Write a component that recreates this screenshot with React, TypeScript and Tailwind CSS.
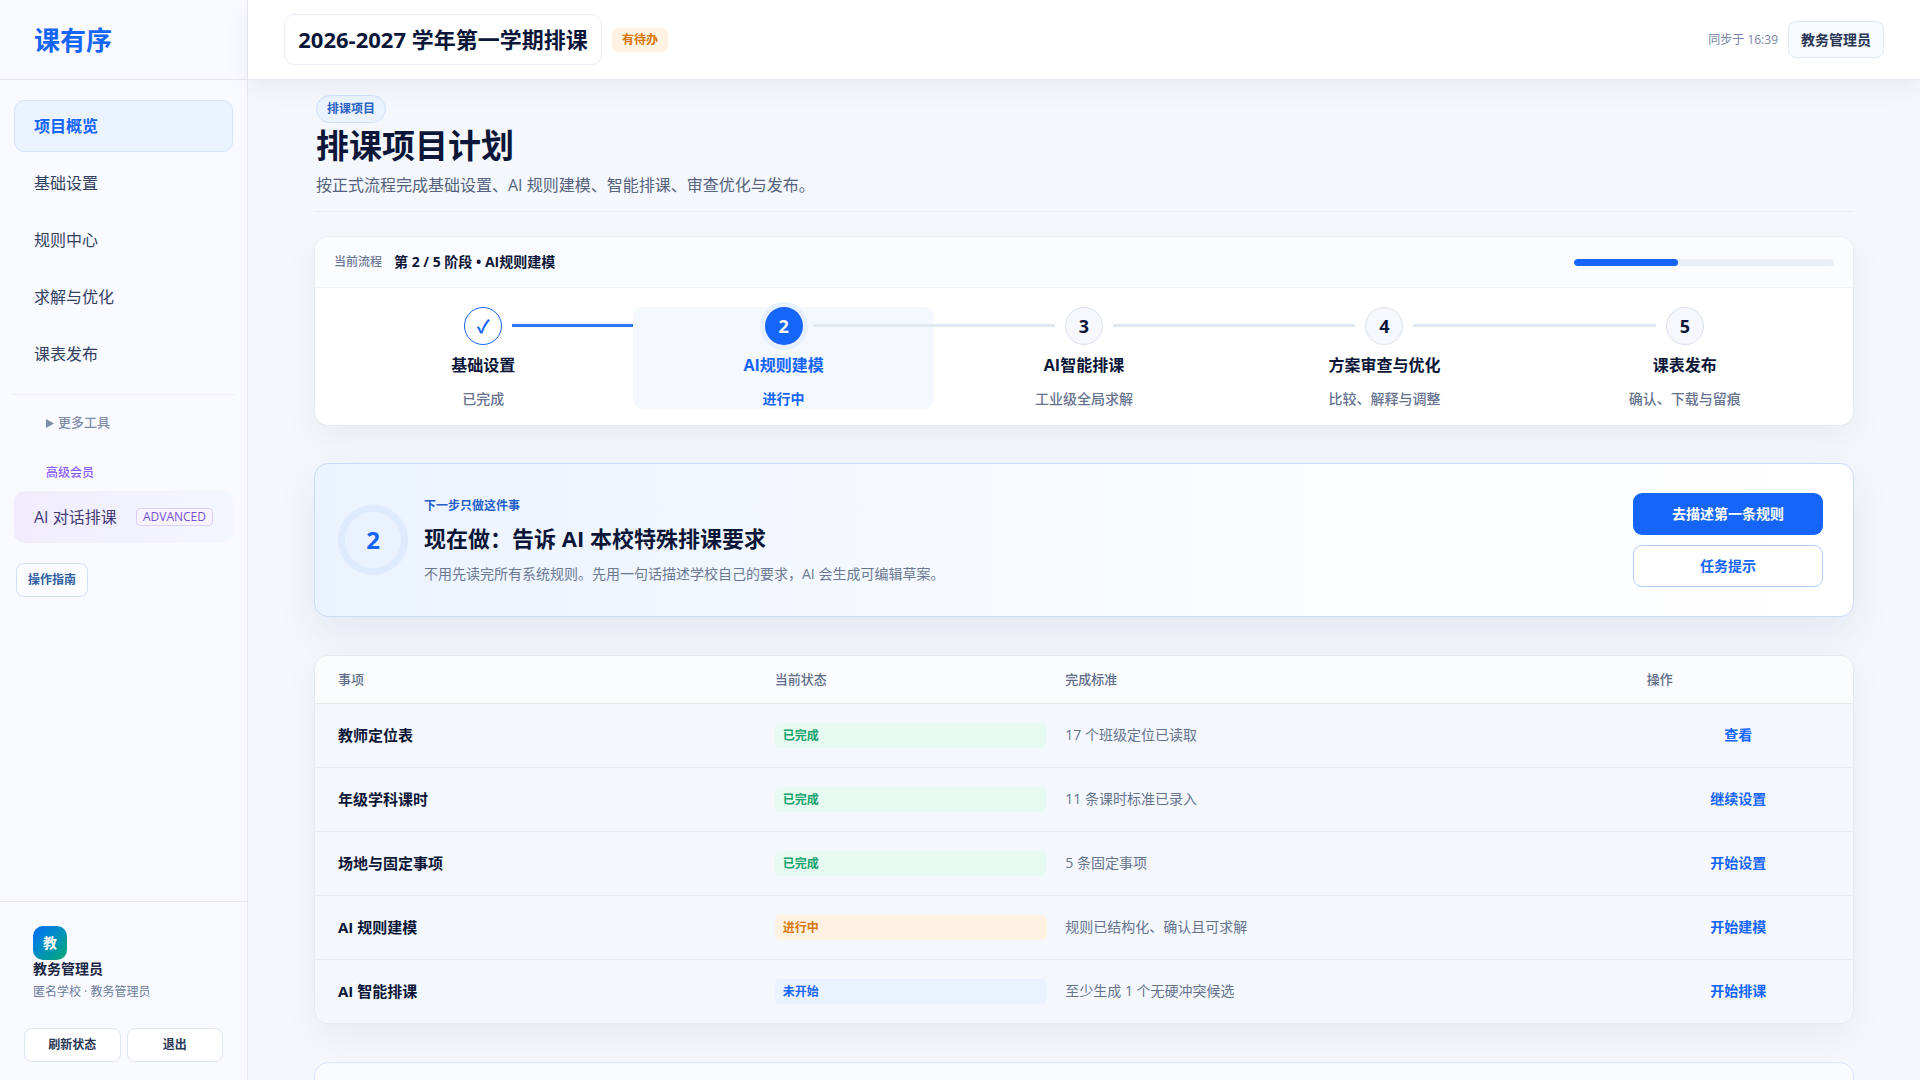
const navItems = ['项目概览', '基础设置', '规则中心', '求解与优化', '课表发布']

const steps = [
  { mark: '✓', title: '基础设置', note: '已完成', state: 'done' },
  { mark: '2', title: 'AI规则建模', note: '进行中', state: 'active' },
  { mark: '3', title: 'AI智能排课', note: '工业级全局求解', state: 'todo' },
  { mark: '4', title: '方案审查与优化', note: '比较、解释与调整', state: 'todo' },
  { mark: '5', title: '课表发布', note: '确认、下载与留痕', state: 'todo' },
]

const rows = [
  { name: '教师定位表', status: '已完成', tone: 'green', standard: '17 个班级定位已读取', action: '查看' },
  { name: '年级学科课时', status: '已完成', tone: 'green', standard: '11 条课时标准已录入', action: '继续设置' },
  { name: '场地与固定事项', status: '已完成', tone: 'green', standard: '5 条固定事项', action: '开始设置' },
  { name: 'AI 规则建模', status: '进行中', tone: 'orange', standard: '规则已结构化、确认且可求解', action: '开始建模' },
  { name: 'AI 智能排课', status: '未开始', tone: 'blue', standard: '至少生成 1 个无硬冲突候选', action: '开始排课' },
]

const toneClass: Record<string, string> = {
  green: 'bg-[#e7faf1] text-[#1aa36f]',
  orange: 'bg-[#fff2e2] text-[#d97706]',
  blue: 'bg-[#eaf1ff] text-[#1565f9]',
}

const markClass: Record<string, string> = {
  done: 'border border-[#1565f9] bg-white text-[#1565f9]',
  active: 'bg-[#1565f9] text-white ring-5 ring-[#e7f0ff]',
  todo: 'border border-[#d9e1ee] bg-[#f6f8fd] text-[#0b1638]',
}

function Sidebar() {
  return (
    <aside className="flex w-[248px] shrink-0 flex-col border-r border-[#e3e9f2] bg-[#f9faff]">
      <div className="flex h-20 shrink-0 items-center border-b border-[#e3e9f2] pl-[34px]">
        <span className="text-[26px] leading-8 font-bold text-[#1565f9]">课有序</span>
      </div>
      <nav className="flex flex-col gap-[5px] px-3.5 pt-5">
        {navItems.map((item, index) => (
          <a
            key={item}
            href="#"
            className={
              index === 0
                ? 'flex h-[52px] items-center rounded-[10px] border border-[#d5e4fb] bg-[#ebf3ff] px-[19px] text-base font-bold text-[#1565f9]'
                : 'flex h-[52px] items-center rounded-[10px] border border-transparent px-[19px] text-base text-[#334160]'
            }
          >
            {item}
          </a>
        ))}
      </nav>
      <div className="mx-3 mt-3.5 border-t border-[#edf1f7]" />
      <details className="px-[46px] pt-[18px]">
        <summary className="flex h-5 cursor-pointer list-none items-center gap-1 text-[13px] font-medium text-[#7f8ca5]">
          <svg width="8" height="9" viewBox="0 0 8 9" fill="currentColor">
            <path d="M0 0L8 4.5L0 9Z" />
          </svg>
          更多工具
        </summary>
      </details>
      <div className="mt-[30px] px-[46px] text-xs leading-5 font-medium text-[#8b5cf6]">高级会员</div>
      <a
        href="#"
        className="mx-3.5 mt-2 flex h-[52px] items-center justify-between rounded-[10px] bg-linear-to-r from-[#f1ecfd] to-[#f3f7ff] px-5 text-base text-[#453a78]"
      >
        AI 对话排课
        <span className="rounded border border-[#dccffb] bg-[#f8f4ff] px-1.5 text-xs leading-4 text-[#7450d8]">
          ADVANCED
        </span>
      </a>
      <button className="mt-5 ml-4 h-[34px] w-[72px] rounded-lg border border-[#cfdff3] bg-[#fafcff] text-xs font-bold text-[#2f5f9f]">
        操作指南
      </button>
      <div className="mt-auto border-t border-[#e3e9f2] px-6 pt-6 pb-[18px]">
        <div className="px-[9px]">
          <div className="flex size-[34px] items-center justify-center rounded-[10px] bg-linear-to-br from-[#1668ff] to-[#22a86e] text-sm font-bold text-white">
            教
          </div>
          <div className="text-sm leading-[18px] font-bold text-[#1b2747]">教务管理员</div>
          <div className="mt-1 text-xs leading-5 text-[#6b7a99]">匿名学校 · 教务管理员</div>
        </div>
        <div className="mt-[26px] grid grid-cols-2 gap-1.5 text-xs font-bold text-[#2a3756]">
          <button className="h-[34px] rounded-lg border border-[#dfe7f2] bg-white">刷新状态</button>
          <button className="h-[34px] rounded-lg border border-[#dfe7f2] bg-white">退出</button>
        </div>
      </div>
    </aside>
  )
}

function Header() {
  return (
    <header className="relative z-10 flex h-20 shrink-0 items-center gap-2.5 border-b border-[#e8edf4] bg-white px-9 shadow-[0_8px_28px_rgba(15,23,42,0.05)]">
      <button className="h-[51px] w-[318px] rounded-[10px] border border-[#e9eff8] text-[22px] font-bold text-[#0b1638]">
        2026-2027 学年第一学期排课
      </button>
      <span className="rounded-md bg-[#fff3e3] px-2.5 text-xs leading-6 font-bold text-[#d97706]">有待办</span>
      <span className="ml-auto text-xs text-[#7885a0]">同步于 16:39</span>
      <button className="h-[37px] rounded-lg border border-[#dfe7f5] bg-[#f7faff] px-3 text-sm font-bold text-[#2a3756]">
        教务管理员
      </button>
    </header>
  )
}

function Progress() {
  return (
    <section className="mt-6 overflow-hidden rounded-[14px] border border-[#e5eaf3] bg-white shadow-[0_12px_36px_rgba(15,23,42,0.05)]">
      <div className="flex h-[51px] items-center gap-3 border-b border-[#f0f3f8] bg-[#fbfcff] px-[19px]">
        <span className="text-xs font-medium text-[#6b7893]">当前流程</span>
        <strong className="text-sm font-bold text-[#0b1638]">第 2 / 5 阶段 • AI规则建模</strong>
        <div className="ml-auto h-[7px] w-[260px] overflow-hidden rounded-full bg-[#e7eef6]">
          <div className="h-full w-2/5 rounded-full bg-[#1565f9]" />
        </div>
      </div>
      <ol className="grid grid-cols-5 px-[18px] pt-[19px] pb-4">
        {steps.map((step, index) => (
          <li
            key={step.title}
            className={
              step.state === 'active'
                ? 'relative flex h-[102px] flex-col items-center rounded-[10px] bg-[#f4f8ff]'
                : 'relative flex h-[102px] flex-col items-center'
            }
          >
            {index < steps.length - 1 && (
              <span
                className={
                  step.state === 'done'
                    ? 'absolute top-[17px] left-[calc(50%+29px)] h-[3px] w-[calc(100%-58px)] bg-[#2f74f5]'
                    : 'absolute top-[17px] left-[calc(50%+29px)] h-[3px] w-[calc(100%-58px)] bg-[#e0e8f2]'
                }
              />
            )}
            <span className={`flex size-[38px] shrink-0 items-center justify-center rounded-full text-lg font-bold ${markClass[step.state]}`}>
              {step.mark}
            </span>
            <strong className={`mt-2 text-base leading-6 font-bold ${step.state === 'active' ? 'text-[#1565f9]' : 'text-[#0b1638]'}`}>
              {step.title}
            </strong>
            <span className={`mt-3 text-sm leading-5 ${step.state === 'active' ? 'font-bold text-[#1565f9]' : 'font-medium text-[#66738f]'}`}>
              {step.note}
            </span>
          </li>
        ))}
      </ol>
    </section>
  )
}

function NextAction() {
  return (
    <section className="mt-[37px] flex items-center rounded-[14px] border border-[#cbdcf7] bg-linear-to-r from-[#ebf3ff] via-[#fafcff] via-60% to-white py-[29px] pr-[30px] pl-[23px] shadow-[0_16px_40px_rgba(30,64,130,0.08)]">
      <div className="flex size-[70px] shrink-0 items-center justify-center rounded-full border-7 border-[#deebff] bg-[#eaf2ff] text-2xl font-bold text-[#1565f9]">
        2
      </div>
      <div className="ml-4 flex-1">
        <div className="text-xs leading-5 font-bold text-[#235fcb]">下一步只做这件事</div>
        <h2 className="mt-1.5 text-[22px] leading-8 font-bold text-[#0b1638]">现在做：告诉 AI 本校特殊排课要求</h2>
        <p className="mt-2.5 text-sm leading-5 text-[#6b7893]">
          不用先读完所有系统规则。先用一句话描述学校自己的要求，AI 会生成可编辑草案。
        </p>
      </div>
      <div className="flex w-[190px] flex-col gap-2.5 text-sm font-bold">
        <button className="h-[42px] rounded-[9px] bg-[#1565f9] text-white">去描述第一条规则</button>
        <button className="h-[42px] rounded-[9px] border border-[#b3cbf8] bg-white text-[#1565f9]">任务提示</button>
      </div>
    </section>
  )
}

function TaskTable() {
  return (
    <section className="mt-[38px] overflow-hidden rounded-[14px] border border-[#e3e9f2] shadow-[0_12px_36px_rgba(15,23,42,0.05)]">
      <table className="w-full table-fixed text-left">
        <colgroup>
          <col className="w-[29.3%]" />
          <col className="w-[18.9%]" />
          <col className="w-[37.8%]" />
          <col className="w-[14%]" />
        </colgroup>
        <thead className="bg-[#fafcfe] text-[13px] text-[#5f6d8a]">
          <tr className="h-[47px] border-b border-[#e6ebf2]">
            <th className="pl-[23px] font-medium">事项</th>
            <th className="px-[9px] font-medium">当前状态</th>
            <th className="px-[9px] font-medium">完成标准</th>
            <th className="px-[9px] font-medium">操作</th>
          </tr>
        </thead>
        <tbody className="bg-[#f4f7fc]">
          {rows.map((row) => (
            <tr key={row.name} className="h-16 border-b border-[#e6ebf2] last:border-b-0">
              <td className="pl-[23px] text-[15px] font-bold text-[#0b1638]">{row.name}</td>
              <td className="px-[9px]">
                <span className={`block rounded-[5px] px-2 text-xs leading-[25px] font-bold ${toneClass[row.tone]}`}>
                  {row.status}
                </span>
              </td>
              <td className="px-[9px] text-sm text-[#66738f]">{row.standard}</td>
              <td className="pr-[23px] pl-[9px] text-center">
                <a href="#" className="block text-sm font-bold text-[#1565f9]">
                  {row.action}
                </a>
              </td>
            </tr>
          ))}
        </tbody>
      </table>
    </section>
  )
}

export default function App() {
  return (
    <div className="flex h-screen overflow-hidden bg-[#f4f7fc] font-['Open_Sans','Noto_Sans_CJK_SC',sans-serif]">
      <Sidebar />
      <div className="flex min-w-0 flex-1 flex-col">
        <Header />
        <main className="min-h-0 flex-1 overflow-hidden px-9">
          <div className="mx-auto max-w-[1540px] pt-[15px]">
            <div className="border-b border-[#e9eef5] px-0.5 pb-3.5">
              <span className="block w-fit rounded-full border border-[#cfe0fa] bg-[#ebf3ff] px-2.5 text-xs leading-[26px] font-bold text-[#2a62c4]">
                排课项目
              </span>
              <h1 className="mt-0.5 text-[33px] leading-[42px] font-bold text-[#0b1638]">排课项目计划</h1>
              <p className="mt-1.5 text-base leading-6 text-[#56637f]">
                按正式流程完成基础设置、AI 规则建模、智能排课、审查优化与发布。
              </p>
            </div>
            <Progress />
            <NextAction />
            <TaskTable />
            <section className="mt-[38px] h-24 rounded-[14px] border border-[#d5e5fa] bg-[#f9fbff]" />
          </div>
        </main>
      </div>
    </div>
  )
}
